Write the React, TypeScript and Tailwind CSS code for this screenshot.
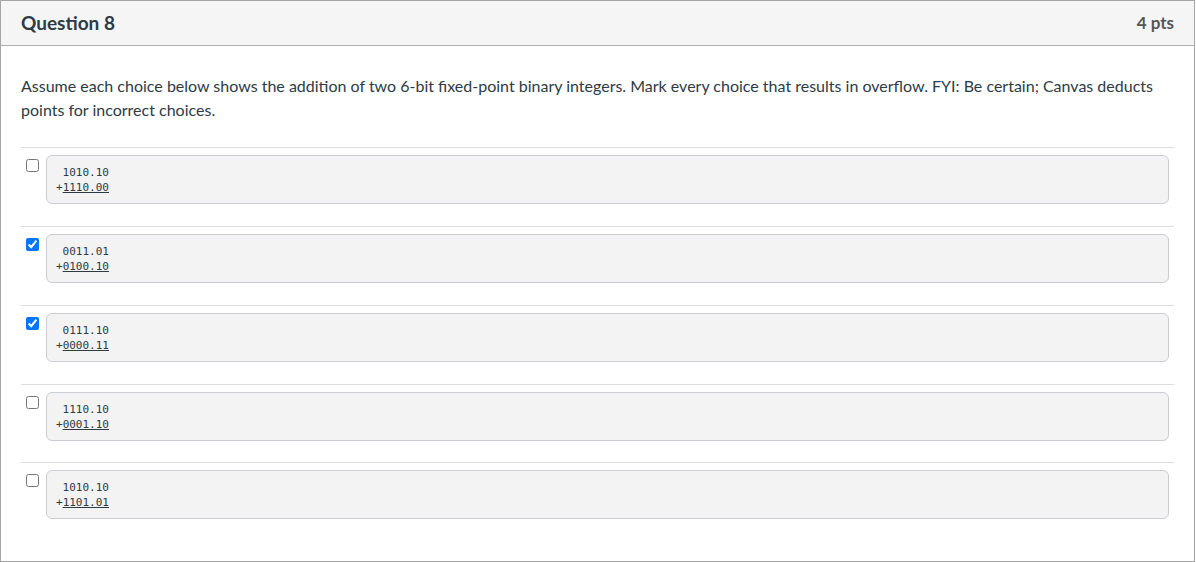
import React from "react";

const choices = [
  { a: "1010.10", b: "1110.00", checked: false },
  { a: "0011.01", b: "0100.10", checked: true },
  { a: "0111.10", b: "0000.11", checked: true },
  { a: "1110.10", b: "0001.10", checked: false },
  { a: "1010.10", b: "1101.01", checked: false },
];

export default function App() {
  return (
    <div className="w-[1196px] h-[562px] bg-white" style={{ fontFamily: "Lato, 'Noto Sans', sans-serif" }}>
      <div className="w-[1195px] h-[562px] border border-[#a5a5a5] flex flex-col">
        <div className="h-[45px] bg-[#f5f5f5] border-b border-[#b0b0b0] flex items-center justify-between pl-[20px] pr-[20px] shrink-0">
          <div className="text-[19px] font-bold text-[#2d3b45] leading-none mt-[-2px]">Question 8</div>
          <div className="text-[17px] font-bold text-[#555555] leading-none mt-[-2px]">4 pts</div>
        </div>
        <div className="px-[20px] pt-[28px]">
          <p className="text-[16px] leading-[24px] text-[#2d3b45] pr-[10px]">
            Assume each choice below shows the addition of two 6-bit fixed-point binary integers. Mark every choice that results in overflow. FYI: Be certain; Canvas deducts points for incorrect choices.
          </p>
          <div className="mt-[25px]">
            {choices.map((c, i) => (
              <div key={i} className={"border-t border-[#dddddd] pt-[7px] flex items-start " + (i === 3 ? "pb-[21px]" : "pb-[22px]")}>
                <input
                  type="checkbox"
                  defaultChecked={c.checked}
                  className="m-0 mt-[4px] ml-[5px] w-[13px] h-[13px] shrink-0"
                />
                <div className="ml-[7px] mr-[5px] flex-1 h-[49px] bg-[#f3f3f3] border border-[#c9cdd1] rounded-[6px] pl-[9px] pt-[9px]">
                  <pre
                    className="text-[11px] leading-[15px] text-[#2d3b45] m-0"
                    style={{ fontFamily: "'DejaVu Sans Mono', 'Liberation Mono', monospace" }}
                  >
                    {" " + c.a}
                    {"\n+"}
                    <span className="underline">{c.b}</span>
                  </pre>
                </div>
              </div>
            ))}
          </div>
        </div>
      </div>
    </div>
  );
}
